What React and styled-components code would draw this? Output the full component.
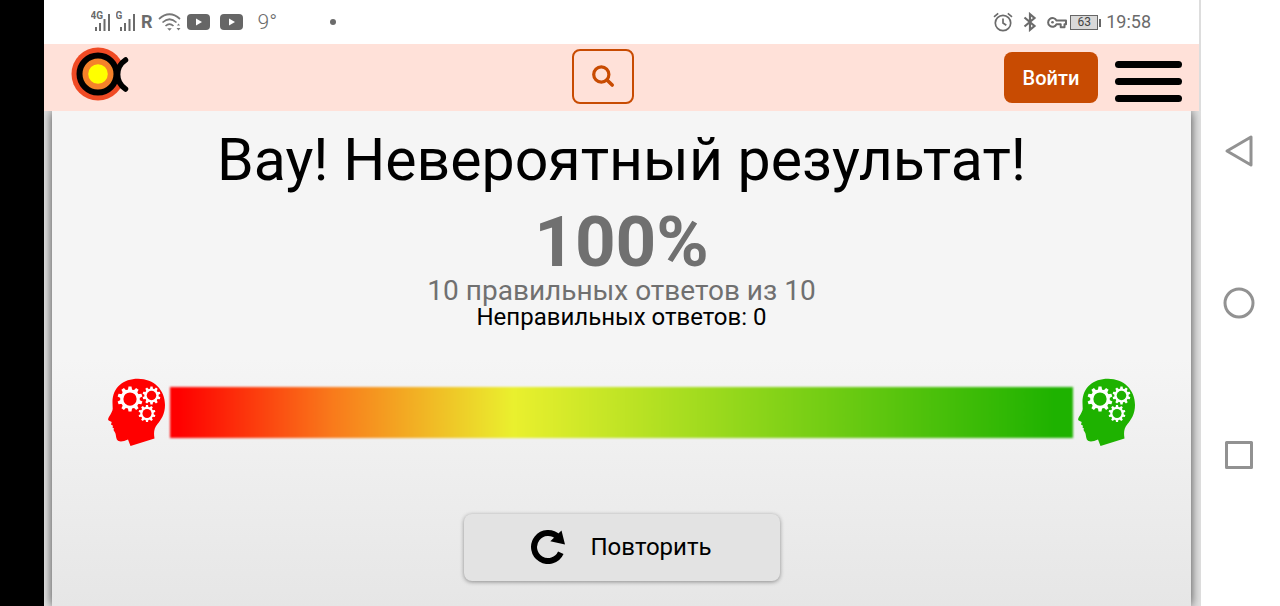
import React from "react";
import styled, { createGlobalStyle } from "styled-components";

const GlobalStyle = createGlobalStyle`
  *, *::before, *::after { box-sizing: border-box; }
  body {
    margin: 0;
    background: #fff;
    color: #000;
    font-family: Roboto, "Liberation Sans", sans-serif;
  }
  button { font-family: inherit; cursor: pointer; }
`;

const Screen = styled.div`
  display: flex;
  min-height: 100vh;
`;

const Cutout = styled.div`
  flex: 0 0 44px;
  background: #000;
`;

const Browser = styled.div`
  flex: 1;
  min-width: 0;
  display: flex;
  flex-direction: column;
`;

const StatusBar = styled.div`
  display: flex;
  align-items: center;
  justify-content: space-between;
  height: 44px;
  padding: 0 48px 0 47px;
  background: #fff;
  color: #6b6b6b;
  border-right: 2px solid #ddd;
`;

const StatusGroup = styled.div`
  display: flex;
  align-items: center;
  gap: ${(p) => p.$gap}px;
  svg { display: block; flex: none; }
`;

const Videos = styled(StatusGroup)`
  margin-right: 10px;
`;

const StatusText = styled.span`
  font-size: ${(p) => p.$size || 18}px;
  line-height: 24px;
  font-weight: ${(p) => p.$weight || 400};
`;

const Clock = styled(StatusText)`
  margin-left: 5px;
`;

const Dot = styled.span`
  width: 6px;
  height: 6px;
  margin-left: 48px;
  border-radius: 50%;
  background: #6b6b6b;
`;

const Battery = styled.span`
  position: relative;
  width: 28px;
  height: 15px;
  border: 1px solid #666;
  background: #d9d9d9;
  color: #444;
  font-size: 12px;
  line-height: 13px;
  text-align: center;
  &::after {
    content: "";
    position: absolute;
    right: -4px;
    top: 3px;
    width: 2px;
    height: 8px;
    background: #666;
  }
`;

const Header = styled.header`
  position: relative;
  z-index: 1;
  display: flex;
  align-items: center;
  justify-content: space-between;
  height: 67px;
  padding: 0 17px 0 26px;
  background: #ffe1d9;
  border-right: 2px solid #ddd;
`;

const LogoLink = styled.a`
  width: 132px;
  svg { display: block; margin-bottom: 8px; }
`;

const SearchButton = styled.button`
  display: grid;
  place-items: center;
  width: 62px;
  height: 55px;
  margin-bottom: 2px;
  padding: 0;
  border: 2px solid #c84b02;
  border-radius: 8px;
  background: transparent;
`;

const HeaderActions = styled.div`
  display: flex;
  align-items: center;
  gap: 17px;
`;

const LoginButton = styled.button`
  width: 94px;
  height: 51px;
  padding: 0;
  border: 0;
  border-radius: 8px;
  background: #c84b02;
  color: #fff;
  font-size: 20px;
  font-weight: 500;
`;

const MenuButton = styled.button`
  display: flex;
  flex-direction: column;
  gap: 10px;
  width: 67px;
  padding: 7px 0 0;
  border: 0;
  background: none;
  span {
    width: 100%;
    height: 7px;
    border-radius: 4px;
    background: #000;
  }
`;

const Page = styled.div`
  flex: 1;
  display: flex;
  padding: 0 10px 0 8px;
  background: #e2e2e2;
  overflow: hidden;
`;

const Result = styled.main`
  flex: 1;
  display: flex;
  flex-direction: column;
  align-items: center;
  padding: 13px 56px 25px;
  background: linear-gradient(#f5f5f5 50%, #e6e6e6);
  box-shadow: 0 0 10px rgba(0, 0, 0, 0.7);
`;

const Title = styled.h1`
  margin: 0;
  font-size: 59px;
  line-height: 72px;
  font-weight: 400;
`;

const Percent = styled.strong`
  margin-top: 10px;
  color: #707070;
  font-size: 71px;
  line-height: 71px;
  font-weight: 700;
`;

const Summary = styled.p`
  margin: 0;
  color: ${(p) => (p.$muted ? "#707070" : "#000")};
  font-size: ${(p) => (p.$muted ? 28 : 24)}px;
  line-height: ${(p) => (p.$muted ? 28 : 24)}px;
`;

const Scale = styled.div`
  align-self: stretch;
  display: flex;
  align-items: center;
  gap: 5px;
  margin-top: 49px;
  svg { display: block; flex: none; }
`;

const ScaleBar = styled.div`
  flex: 1;
  height: 51px;
  background: linear-gradient(90deg, #f00 1%, #f97a1b 18%, #eaf02e 38%, #96d81c 62%, #1eb200 98%);
  filter: blur(1px);
`;

const RepeatButton = styled.button`
  display: flex;
  align-items: center;
  justify-content: center;
  gap: 24px;
  width: 316px;
  height: 67px;
  margin-top: 68px;
  padding: 0 0 2px;
  border: 0;
  border-radius: 8px;
  background: #e3e3e3;
  box-shadow: 0 1px 4px rgba(0, 0, 0, 0.4);
  color: #000;
  font-size: 24px;
`;

const SystemNav = styled.nav`
  flex: 0 0 79px;
  display: flex;
  flex-direction: column;
  align-items: center;
  justify-content: center;
  gap: 112px;
  padding-right: 3px;
  background: #fff;
`;

const NavButton = styled.button`
  width: 40px;
  height: 40px;
  padding: 0;
  border: 0;
  background: none;
  svg { display: block; }
`;

function Signal({ label }) {
  return (
    <svg width="20" height="22" viewBox="0 0 20 22" fill="#6b6b6b">
      <text x="-0.500" y="8" fontSize="10" fontWeight="700" fontFamily="Roboto, sans-serif">{label}</text>
      <path d="M4 16h2v4H4zM8 12h2v8H8zM12.500 8h2v12h-2zM17 3h2v17h-2z" />
    </svg>
  );
}

function Wifi() {
  return (
    <svg width="24" height="20" viewBox="0 0 24 20" fill="none" stroke="#777" strokeWidth="1.700">
      <path d="M1 7Q11.500-2.500 22 7M4.500 10.500Q11.500 4 18.500 10.500M7.500 14Q11.500 10.300 15.500 14" />
      <path d="M9.200 16.200h4.600l-2.300 2.600zM18.500 16h4l-2 2.500zM19 13.500h3l-1.500-2z" fill="#777" stroke="none" />
    </svg>
  );
}

function Video() {
  return (
    <svg width="23" height="16" viewBox="0 0 23 16">
      <rect width="23" height="16" rx="4" fill="#666" />
      <path d="M9 4.500v7l6-3.500z" fill="#fff" />
    </svg>
  );
}

function Alarm() {
  return (
    <svg width="20" height="20" viewBox="0 0 20 20" fill="none" stroke="#6b6b6b" strokeWidth="1.700">
      <circle cx="10" cy="11" r="7.700" />
      <path d="M10 6.500V11l3.300 2.200M1 4.800L5.200 1.400M14.800 1.400L19 4.800" />
    </svg>
  );
}

function Bluetooth() {
  return (
    <svg width="14" height="20" viewBox="0 0 14 20" fill="none" stroke="#6b6b6b" strokeWidth="2.200">
      <path d="M1.500 5.500l10 8.500L7 17.800V2.200L11.500 6l-10 8.500" />
    </svg>
  );
}

function Key() {
  return (
    <svg width="20" height="13" viewBox="0 0 20 13" fill="none" stroke="#6b6b6b" strokeWidth="2">
      <path d="M9.500 4.500H19v3.800h-1.500v3h-3.800v-3H9.500A4.400 4.400 0 1 1 9.500 4.500z" strokeLinejoin="round" />
      <circle cx="5.500" cy="6.300" r="1.300" fill="#6b6b6b" stroke="none" />
    </svg>
  );
}

function Logo() {
  return (
    <svg width="60" height="54" viewBox="0 0 60 54">
      <circle cx="28" cy="27" r="26.500" fill="#f04a24" />
      <path d="M60 7L56 13Q40 27 56 42L60 48z" fill="#ffe1d9" />
      <circle cx="28" cy="27" r="18.500" fill="#f5822a" stroke="#000" strokeWidth="6" />
      <path d="M55.500 13C45 20 45 35 55.500 42" fill="none" stroke="#000" strokeWidth="5.500" strokeLinecap="round" />
      <circle cx="28" cy="27" r="9.800" fill="#ff0" />
    </svg>
  );
}

function Magnifier() {
  return (
    <svg width="24" height="24" viewBox="0 0 24 24" fill="none" stroke="#c84b02">
      <circle cx="10.300" cy="9.500" r="7.600" strokeWidth="3.200" />
      <path d="M16 15l5.200 5" strokeWidth="3.600" strokeLinecap="round" />
    </svg>
  );
}

function Gear({ cx, cy, r, color }) {
  const teeth = Array.from({ length: 10 }, (_, i) => i * 36);
  return (
    <g transform={`translate(${cx} ${cy})`}>
      <circle r={r * 0.79} fill="#fff" />
      {teeth.map((angle) => (
        <path
          key={angle}
          transform={`rotate(${angle})`}
          d={`M${-r * 0.17} ${-r * 0.7}L${-r * 0.12} ${-r}H${r * 0.12}L${r * 0.17} ${-r * 0.7}z`}
          fill="#fff"
        />
      ))}
      <circle r={r * 0.53} fill={color} />
    </g>
  );
}

function Head({ color }) {
  return (
    <svg width="57" height="68" viewBox="0 0 57 68">
      <path
        d="M4.500 25C4 10 15 .7 30 .7C46 .7 57 12 57 27C57 36 53 42 49.500 46C46 50.500 45.500 54 46.500 60.500L22.500 68L20 61.500C16 63.500 12.500 64 10.500 63C7.500 61.500 8.500 57 7 54.500L5.500 52L6 50.500L4.500 49.500L5 47.800L3 46.500L3.700 44L.7 42.500C-.5 41.500 .3 40 1.200 38.500C3 35.500 4.800 32.500 4.700 30.500z"
        fill={color}
      />
      <Gear cx={22} cy={21} r={12.5} color={color} />
      <Gear cx={43.5} cy={17.5} r={9} color={color} />
      <Gear cx={39} cy={35.5} r={8.5} color={color} />
    </svg>
  );
}

function Repeat() {
  return (
    <svg width="35" height="34" viewBox="0 0 35 34">
      <path d="M29.800 22.800A14 14 0 1 1 27 7.200" fill="none" stroke="#000" strokeWidth="6" />
      <path d="M30.500 .5L34 14.500L19.300 11.300z" />
    </svg>
  );
}

export default function App() {
  return (
    <>
      <GlobalStyle />
      <Screen>
        <Cutout />
        <Browser>
          <StatusBar>
            <StatusGroup $gap={5}>
              <Signal label="4G" />
              <Signal label="G" />
              <StatusText $weight={700}>R</StatusText>
              <Wifi />
              <Videos $gap={10}>
                <Video />
                <Video />
              </Videos>
              <StatusText $size={21} $weight={300}>9°</StatusText>
              <Dot />
            </StatusGroup>
            <StatusGroup $gap={10}>
              <Alarm />
              <Bluetooth />
              <StatusGroup $gap={3}>
                <Key />
                <Battery>63</Battery>
                <Clock>19:58</Clock>
              </StatusGroup>
            </StatusGroup>
          </StatusBar>
          <Header>
            <LogoLink href="#" aria-label="Главная"><Logo /></LogoLink>
            <SearchButton aria-label="Поиск"><Magnifier /></SearchButton>
            <HeaderActions>
              <LoginButton>Войти</LoginButton>
              <MenuButton aria-label="Меню"><span /><span /><span /></MenuButton>
            </HeaderActions>
          </Header>
          <Page>
            <Result>
              <Title>Вау! Невероятный результат!</Title>
              <Percent>100%</Percent>
              <Summary $muted>10 правильных ответов из 10</Summary>
              <Summary>Неправильных ответов: 0</Summary>
              <Scale>
                <Head color="#f00" />
                <ScaleBar />
                <Head color="#1eb200" />
              </Scale>
              <RepeatButton><Repeat />Повторить</RepeatButton>
            </Result>
          </Page>
        </Browser>
        <SystemNav>
          <NavButton aria-label="Назад">
            <svg width="40" height="40" viewBox="0 0 40 40" fill="none" stroke="#929292" strokeWidth="3" strokeLinejoin="round">
              <path d="M8 20L32 6v28z" />
            </svg>
          </NavButton>
          <NavButton aria-label="Домой">
            <svg width="40" height="40" viewBox="0 0 40 40" fill="none" stroke="#929292" strokeWidth="3">
              <circle cx="20" cy="20" r="14" />
            </svg>
          </NavButton>
          <NavButton aria-label="Недавние">
            <svg width="40" height="40" viewBox="0 0 40 40" fill="none" stroke="#929292" strokeWidth="3" strokeLinejoin="round">
              <rect x="7.500" y="7.500" width="25" height="25" />
            </svg>
          </NavButton>
        </SystemNav>
      </Screen>
    </>
  );
}
